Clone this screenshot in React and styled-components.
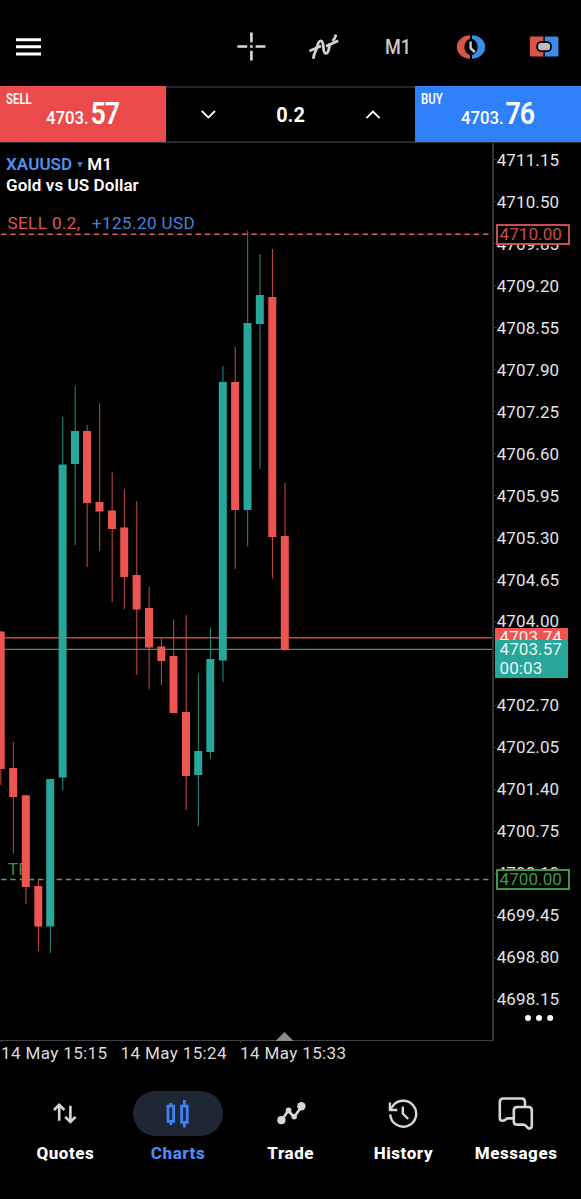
import styled, { createGlobalStyle } from "styled-components";

// data
const RED = "#ee5451";
const GREEN = "#27a69a";

// x, high, open/close top, open/close bottom, low, up
const candles = [
  [0.7, 631, 631.5, 769, 785, false],
  [13.2, 742, 768, 797, 853.5, false],
  [25.8, 795, 795.3, 887, 904, false],
  [38.3, 878.5, 886, 926.5, 951, false],
  [50.2, 778.5, 779, 926.5, 953, true],
  [62.6, 417, 464.5, 777.5, 790, true],
  [75, 386, 431, 464, 545, true],
  [87, 425, 431, 503, 567, false],
  [99.5, 403.5, 502, 511.5, 551, false],
  [112, 472, 510.5, 529, 602, false],
  [124.2, 489, 527.5, 577, 609, false],
  [136.6, 501, 575, 609.5, 675, false],
  [149, 587, 608, 647.5, 689.5, false],
  [161.3, 638.5, 646.5, 661, 685, false],
  [173.5, 619.5, 656, 713, 713, false],
  [186, 615, 712, 776, 810, false],
  [198.2, 673.5, 751, 775, 826, true],
  [210.3, 627.5, 659, 752, 758.5, true],
  [222.8, 366, 382, 660.5, 682, true],
  [235.1, 347, 382, 510, 569, false],
  [247.5, 230.5, 323, 510, 546.5, true],
  [259.8, 254, 295, 324, 469, true],
  [272.3, 249, 297, 537, 578.5, false],
  [284.8, 483, 536, 650, 651, false],
];

const prices = Array.from({ length: 21 }, (_, i) => (4711.15 - i * 0.65).toFixed(2));

const times = ["14 May 15:15", "14 May 15:24", "14 May 15:33"];

// icons
const MenuIcon = () => (
  <svg width="26" height="18" viewBox="0 0 26 18" fill="none" stroke="#fff" strokeWidth="2.9">
    <path d="M0 1.7H25M0 8.8H25M0 16H25" />
  </svg>
);

const CrosshairIcon = () => (
  <svg width="30" height="30" viewBox="0 0 30 30" fill="none" stroke="#dcdcdc" strokeWidth="2.6">
    <path d="M15.4 0.5V10.3M15.4 18.7V28.5M1.4 14.5H11.2M19.6 14.5H29.4M14.1 14.5H16.7" />
  </svg>
);

const IndicatorIcon = () => (
  <svg width="30" height="28" viewBox="0 0 30 28" fill="none" stroke="#d2d2d2" strokeWidth="2.8">
    <path d="M0.4 18L12 13M17 13.2L29.2 7.8" />
    <path d="M4.4 25.8C4.4 22.6 5.4 20.4 6.8 17.6C8.4 14.6 8.4 7.8 11.8 7.8C16 7.8 12.8 20.4 16.8 20.4C20.4 20.4 19.6 13.6 21.2 10.4" />
    <path d="M23.4 8C25.2 6.6 26.4 4.6 27 1.4" />
  </svg>
);

const ClockIcon = () => (
  <svg width="30" height="26" viewBox="0 0 30 26" fill="none">
    <path d="M14 1.2A13.2 11.8 0 0 0 14 24.8V21.2A8.8 8.8 0 0 1 14 4.8Z" fill="#da5348" />
    <path d="M16 1.2A13.2 11.8 0 0 1 16 24.8V21.2A8.8 8.8 0 0 0 16 4.8Z" fill="#3d8be8" />
    <path d="M14.6 7.6V14.2L18.8 18.2" stroke="#d2d2d2" strokeWidth="2.3" />
  </svg>
);

const OneClickIcon = () => (
  <svg width="30" height="22" viewBox="0 0 30 22">
    <path d="M2.2 0.6H14.4V20.6H2.2Q0.8 20.6 0.8 19.2V2Q0.8 0.6 2.2 0.6Z" fill="#da5348" />
    <path d="M15.8 0.6H28Q29.4 0.6 29.4 2V19.2Q29.4 20.6 28 20.6H15.8Z" fill="#3d8be8" />
    <rect x="8.2" y="6" width="13.8" height="9.2" rx="4" fill="#b9bdc3" stroke="#080808" strokeWidth="1.8" />
  </svg>
);

const QuotesIcon = () => (
  <svg width="24" height="22" viewBox="0 0 24 22" fill="none" stroke="#d6d6d6" strokeWidth="2.6">
    <path d="M6.2 17.8V2M1 7L6.2 1.8L11.4 7M17.4 2.8V18.8M12.2 13.8L17.4 19L22.6 13.8" />
  </svg>
);

const ChartsIcon = () => (
  <svg width="24" height="28" viewBox="0 0 24 28" fill="none" stroke="#3b82f6" strokeWidth="2.8">
    <path d="M4.8 3V5.5M4.8 22V25M18.4 0V5.5M18.4 22.5V27.5" />
    <path d="M2 6.1H7.6V21.4H2ZM15.6 6.1H21.2V22.4H15.6Z" />
  </svg>
);

const TradeIcon = () => (
  <svg width="30" height="24" viewBox="0 0 30 24" fill="#d6d6d6">
    <path d="M5.4 18.4L12.2 8.8L18.2 15L25.4 4.8" fill="none" stroke="#d6d6d6" strokeWidth="2.6" />
    <circle cx="5.4" cy="18.2" r="4.1" />
    <circle cx="12.6" cy="8.4" r="2.9" />
    <circle cx="18.2" cy="14.8" r="2.7" />
    <circle cx="25.4" cy="4.2" r="4.2" />
  </svg>
);

const HistoryIcon = () => (
  <svg width="30" height="30" viewBox="0 0 30 30" fill="none" stroke="#d6d6d6" strokeWidth="2.4">
    <path d="M2.2 15.4A13 13 0 1 0 4.3 7.6L2.3 10.5" />
    <path d="M1.9 3.6V11H9.3" />
    <path d="M14.8 7.6V14.6L20.2 20" />
  </svg>
);

const MessagesIcon = () => (
  <svg width="36" height="34" viewBox="0 0 36 34" fill="none" stroke="#d6d6d6" strokeWidth="2.6" strokeLinejoin="round">
    <path d="M15.4 21.4H9.6C8 21.4 7.1 23.8 4.6 23.8C2.7 23.8 1.8 22.8 1.8 21V5Q1.8 1.5 5.3 1.5H23.6Q27 1.5 27 5V9.6" />
    <path d="M19.3 10H30.6Q33.8 10 33.8 13.2V28C33.8 30.5 33 31.6 31.2 31.6C28.7 31.6 28.4 27.6 25.9 27.6H19.3Q15.8 27.6 15.8 24.4V13.2Q15.8 10 19.3 10Z" />
  </svg>
);

const Chevron = ({ up }) => (
  <svg width="16" height="10" viewBox="0 0 16 10" fill="none" stroke="#fff" strokeWidth="1.8">
    <path d={up ? "M1.4 8.2L8 1.6L14.6 8.2" : "M1.8 1L8.4 7.6L15 1"} />
  </svg>
);

const tabs = [
  { name: "Quotes", icon: <QuotesIcon /> },
  { name: "Charts", icon: <ChartsIcon />, active: true },
  { name: "Trade", icon: <TradeIcon /> },
  { name: "History", icon: <HistoryIcon /> },
  { name: "Messages", icon: <MessagesIcon /> },
];

function Candles() {
  return (
    <Plot viewBox="0 143 492 898">
      <path d="M0 637.8H492" stroke="#c9473f" strokeWidth="1.5" />
      <path d="M0 649.3H492" stroke="#3f8f86" strokeWidth="1.3" />
      <path d="M1 234.2H492" stroke="#d9625f" strokeWidth="1.6" strokeDasharray="5.4 3.87" />
      <path d="M1 879.5H492" stroke="#4ca64f" strokeWidth="1.6" strokeDasharray="5.4 3.87" />
      <SvgText x="8" y="875" $color="#3f8f45">TP</SvgText>
      {candles.map(([x, high, top, bottom, low, up]) => (
        <g key={x} fill={up ? GREEN : RED}>
          <rect x={x - 0.4} y={high} width="1.1" height={low - high} opacity="0.78" />
          <rect x={x - 4} y={top} width="8" height={bottom - top} />
        </g>
      ))}
      <path d="M275.5 1041L284.5 1032L293.5 1041Z" fill="#8c8c8c" />
    </Plot>
  );
}

// main
function App() {
  return (
    <Screen>
      <GlobalStyle />
      <Header>
        <MenuIcon />
        <Tools>
          <CrosshairIcon />
          <IndicatorIcon />
          <Period>M1</Period>
          <ClockIcon />
          <OneClickIcon />
        </Tools>
      </Header>
      {/* one click trading */}
      <TradeBar>
        <PriceButton $color="#eb4c4b">
          <Side>SELL</Side>
          <Price>
            4703.<Pips>57</Pips>
          </Price>
        </PriceButton>
        <Volume>
          <Chevron />
          <span>0.2</span>
          <Chevron up />
        </Volume>
        <PriceButton $color="#2f81fb">
          <Side>BUY</Side>
          <Price>
            4703.<Pips>76</Pips>
          </Price>
        </PriceButton>
      </TradeBar>
      {/* chart */}
      <Chart>
        <PlotArea>
          <Candles />
          <Legend>
            <Symbol>
              <Ticker>XAUUSD</Ticker>
              <svg width="6" height="6" viewBox="0 0 6 6">
                <path d="M0.2 0.3H5.8L3 5.6Z" fill="#4a86dc" />
              </svg>
              M1
            </Symbol>
            <div>Gold vs US Dollar</div>
            <Position>
              <span>SELL 0.2,</span>
              <Profit>+125.20 USD</Profit>
            </Position>
          </Legend>
        </PlotArea>
        <PriceAxis>
          {prices.map((p) => (
            <Tick key={p}>{p}</Tick>
          ))}
          <OutlineTag $top={85} $color="#c44f4d">4710.00</OutlineTag>
          <OutlineTag $top={730} $color="#3d9a44">4700.00</OutlineTag>
          <FillTag $color={RED} $top={489}>4703.74</FillTag>
          <FillTag $color={GREEN} $top={501}>
            4703.57
            <br />
            00:03
          </FillTag>
          <Dots width="30" height="8" viewBox="0 0 30 8" fill="#fff">
            <circle cx="4" cy="4" r="3" />
            <circle cx="15" cy="4" r="3" />
            <circle cx="26.2" cy="4" r="3" />
          </Dots>
        </PriceAxis>
      </Chart>
      <TimeAxis>
        {times.map((t) => (
          <Time key={t}>{t}</Time>
        ))}
      </TimeAxis>
      {/* bottom tabs */}
      <Nav>
        {tabs.map((tab) => (
          <Tab key={tab.name} $active={tab.active}>
            <Pill $active={tab.active}>{tab.icon}</Pill>
            {tab.name}
          </Tab>
        ))}
      </Nav>
    </Screen>
  );
}

export default App;

// style
const GlobalStyle = createGlobalStyle`
  * {
    box-sizing: border-box;
  }

  body {
    margin: 0;
    background: #000;
  }

  svg {
    display: block;
    flex-shrink: 0;
  }
`;

const Screen = styled.div`
  width: 581px;
  height: 1199px;
  display: flex;
  flex-direction: column;
  overflow: hidden;
  background: #000;
  color: #fff;
  font-family: Roboto, "Liberation Sans", sans-serif;
`;

const Header = styled.header`
  height: 86px;
  padding: 7px 22px 0 16px;
  display: flex;
  align-items: center;
  justify-content: space-between;
`;

const Tools = styled.div`
  width: 323px;
  display: flex;
  align-items: center;
  justify-content: space-between;
`;

const Period = styled.div`
  width: 30px;
  display: flex;
  justify-content: center;
  color: #c9c9c9;
  font-size: 20.5px;
  font-weight: 500;
  line-height: 24px;
  transform: scaleX(0.88);
`;

const TradeBar = styled.div`
  height: 57px;
  display: grid;
  grid-template-columns: 166px 249px 166px;
  border-bottom: 1px solid #2c2c33;
`;

const PriceButton = styled.div`
  padding: 5px 0 0 6px;
  background: ${(props) => props.$color};
`;

const Side = styled.div`
  height: 16px;
  font-size: 15px;
  font-weight: 600;
  line-height: 17px;
  transform: scaleX(0.76);
  transform-origin: left;
`;

const Price = styled.div`
  height: 30px;
  margin: -8px 0 0 39.5px;
  display: flex;
  align-items: baseline;
  font-size: 19px;
  font-weight: 500;
  line-height: 30px;
  transform: scaleX(0.88);
  transform-origin: left;
`;

const Pips = styled.span`
  margin-left: 2px;
  font-size: 30.5px;
  font-weight: 600;
  letter-spacing: -1.2px;
`;

const Volume = styled.div`
  padding: 0 34px;
  display: flex;
  align-items: center;
  justify-content: space-between;
  border-top: 2px solid #24242a;
  border-bottom: 1px solid #24242a;
  font-size: 20px;
  font-weight: 700;
`;

const Chart = styled.div`
  height: 898px;
  display: flex;
`;

const PlotArea = styled.div`
  position: relative;
  width: 494px;
  border-right: 2px solid #303036;
  border-bottom: 1px solid #404046;
`;

const Plot = styled.svg`
  width: 492px;
  height: 898px;
`;

const SvgText = styled.text`
  fill: ${(props) => props.$color};
  font-size: 17px;
`;

const Legend = styled.div`
  position: absolute;
  top: 11px;
  left: 6px;
  font-size: 17px;
  font-weight: 600;
  line-height: 21px;
  letter-spacing: 0.08px;
`;

const Symbol = styled.div`
  display: flex;
  align-items: center;
  gap: 4.5px;
`;

const Ticker = styled.span`
  color: #4d92ef;
`;

const Position = styled.div`
  margin: 17px 0 0 1.5px;
  display: flex;
  gap: 11.5px;
  color: #dc5a5c;
  font-size: 17px;
  font-weight: 400;
  letter-spacing: 0.42px;
`;

const Profit = styled.span`
  color: #4a80dc;
`;

const PriceAxis = styled.div`
  position: relative;
  width: 87px;
  height: 898px;
  margin-top: -4px;
  font-size: 17px;
  letter-spacing: 0.1px;
`;

const Tick = styled.div`
  height: 41.96px;
  display: flex;
  align-items: center;
  gap: 0.7px;
  color: #e4e4e4;

  &::before {
    content: "";
    width: 2px;
    height: 1px;
    background: #303036;
  }
`;

const Tag = styled.div`
  position: absolute;
  top: ${(props) => props.$top}px;
  line-height: 19px;
`;

const OutlineTag = styled(Tag)`
  left: 1.5px;
  width: 74px;
  height: 21px;
  padding-left: 2px;
  border: 2px solid ${(props) => props.$color};
  background: #000;
  color: ${(props) => props.$color};
  line-height: 17px;
`;

const FillTag = styled(Tag)`
  left: 1px;
  width: 73px;
  padding-left: 4.5px;
  background: ${(props) => props.$color};
  color: #eef3f2;
`;

const Dots = styled.svg`
  position: absolute;
  top: 875px;
  left: 29.5px;
`;

const TimeAxis = styled.div`
  height: 29px;
  display: grid;
  grid-template-columns: repeat(3, 119.5px);
`;

const Time = styled.div`
  padding-left: 1px;
  color: #dcdcdc;
  font-size: 17px;
  line-height: 22px;
  letter-spacing: 0.38px;
  white-space: nowrap;

  &::before {
    content: "";
    display: block;
    width: 1px;
    height: 1px;
    background: #505056;
  }
`;

const Nav = styled.nav`
  flex: 1;
  padding: 21px 9px 0;
  display: grid;
  grid-template-columns: repeat(5, 112.7px);
  align-content: start;
`;

const Tab = styled.div`
  display: flex;
  flex-direction: column;
  align-items: center;
  gap: 7px;
  color: ${(props) => (props.$active ? "#4d8df2" : "#fff")};
  font-size: 17px;
  font-weight: 800;
  line-height: 20px;
  letter-spacing: 0.55px;
`;

const Pill = styled.div`
  width: 90px;
  height: 45px;
  display: flex;
  align-items: center;
  justify-content: center;
  border-radius: 23px;
  background: ${(props) => (props.$active ? "#1e2733" : "transparent")};
`;
